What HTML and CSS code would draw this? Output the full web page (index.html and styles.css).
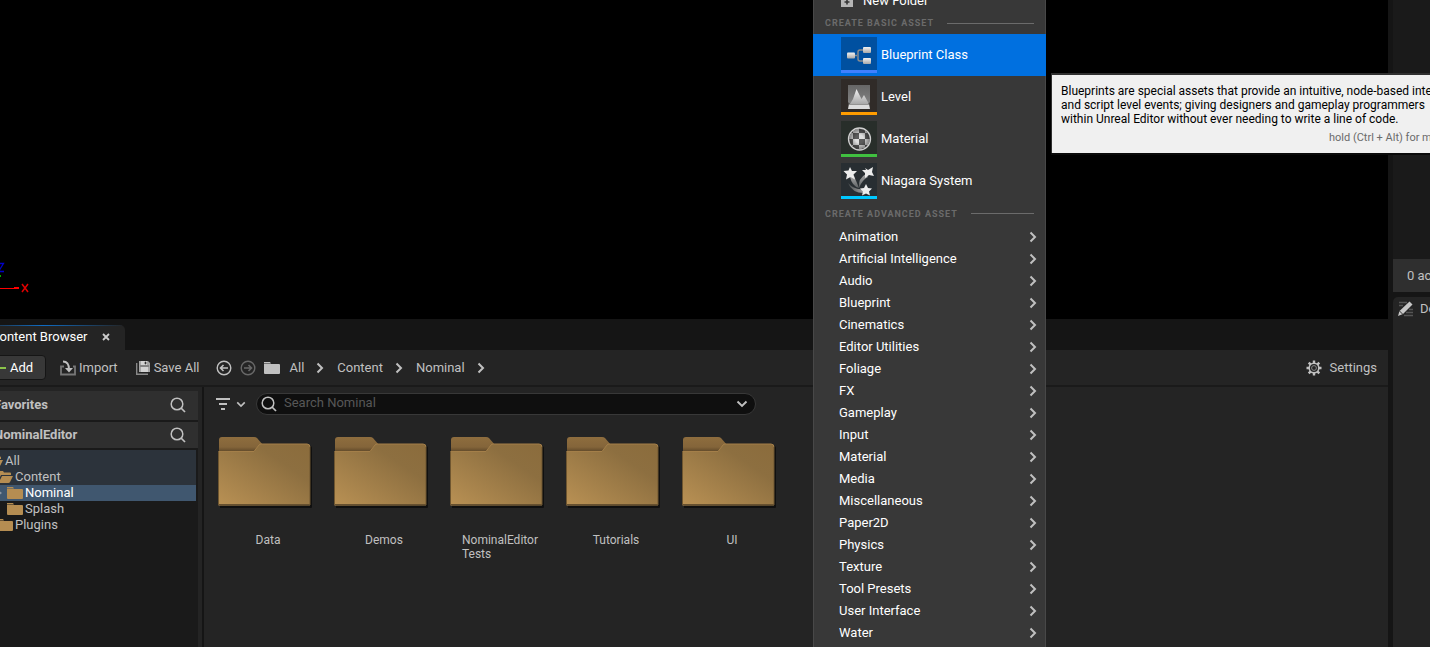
FILE: index.html
```html
<!DOCTYPE html>
<html lang="en">
<head>
<meta charset="utf-8">
<title>Content Browser</title>
<link rel="stylesheet" href="styles.css">
</head>
<body>
<svg class="defs" aria-hidden="true">
  <defs>
    <linearGradient id="front" x1="0" y1="1" x2="1" y2="0"><stop offset="0" stop-color="#b99154"/><stop offset=".7" stop-color="#8d6f40"/><stop offset="1" stop-color="#8b6c3c"/></linearGradient>
    <linearGradient id="tab" x1="0" y1="0" x2="0" y2="1"><stop offset="0" stop-color="#8e6d3e"/><stop offset=".5" stop-color="#84653a"/><stop offset=".75" stop-color="#5c4628"/></linearGradient>
    <linearGradient id="silver" x1="0" y1="0" x2="0" y2="1"><stop offset="0" stop-color="#f2f2f2"/><stop offset="1" stop-color="#a8a8a8"/></linearGradient>
    <linearGradient id="steel" x1="0" y1="0" x2="0" y2="1"><stop offset="0" stop-color="#666"/><stop offset="1" stop-color="#8a8a8a"/></linearGradient>
    <linearGradient id="trail" x1="0" y1="0" x2="0" y2="1"><stop offset="0" stop-color="#a8a8a8"/><stop offset="1" stop-color="#5c6062"/></linearGradient>
    <linearGradient id="trail-low" x1="0" y1="0" x2="1" y2="0"><stop offset="0" stop-color="#4c5052"/><stop offset="1" stop-color="#a0a0a0"/></linearGradient>
    <radialGradient id="shade"><stop offset=".4" stop-color="#000" stop-opacity="0"/><stop offset="1" stop-color="#000" stop-opacity=".4"/></radialGradient>
    <clipPath id="ball"><circle cx="18.500" cy="18" r="10"/></clipPath>
    <symbol id="folder-big" viewBox="0 0 94 72">
      <path d="M2 10h90q2 0 2 2v59q0 1-1 1H2z" fill="#101010"/>
      <path d="M1 20V4q0-3 3-3h32q2 0 3 1l6 7-5 12H1z" fill="url(#tab)"/>
      <path d="M.5 15.500H36l5-6.500q1-1 2-1h46q3 0 3 3v58.500H.5z" fill="url(#front)"/>
      <path d="M.5 15.500H36l5-6.500q1-1 2-1h46q3 0 3 3" fill="none" stroke="#a47f49"/>
      <path d="M0 68.500h92" stroke="#66502f"/><path d="M92 11v58M.5 16v53" stroke="#6f5630"/>
    </symbol>
    <symbol id="search" viewBox="0 0 16 16"><circle cx="7" cy="7" r="5.800" fill="none" stroke="currentColor" stroke-width="1.500"/><path d="M11 11l4 4" stroke="currentColor" stroke-width="1.700"/></symbol>
    <symbol id="chev" viewBox="0 0 8 12"><path d="M1.500 1.500L6 6l-4.500 4.500" fill="none" stroke="currentColor" stroke-width="2"/></symbol>
    <symbol id="down" viewBox="0 0 12 8"><path d="M1.500 1.500L6 6l4.500-4.500" fill="none" stroke="currentColor" stroke-width="1.900"/></symbol>
    <symbol id="folder" viewBox="0 0 16 12"><path d="M0 0h6l1 1.500H0zM0 2h15q1 0 1 1v8q0 1-1 1H1q-1 0-1-1z" fill="currentColor"/></symbol>
    <symbol id="folder-open" viewBox="0 0 16 12"><path d="M0 1q0-1 1-1h5l1 1.500h6q1 0 1 1V4H4L2 8H0zM5 5h11l-3 6q-.5 1-1.500 1H1V9h2z" fill="currentColor"/></symbol>
  </defs>
</svg>

<div class="app">
  <main class="main">
    <section class="viewport" aria-label="Viewport">
      <svg class="axes" width="60" height="36" viewBox="0 0 60 36">
        <path d="M0 28.500h38" stroke="#f00"/><path d="M38 28h5" stroke="#f00" stroke-width="2"/>
        <path d="M24 15v2" stroke="#0a0" stroke-width="2"/>
        <path d="M22 3.500h5.500L23.500 10M22 11.500h6" stroke="#0000c8" stroke-width="1.300" fill="none"/>
        <path d="M46 24l6 8M52 24l-6 8" stroke="#e00000" stroke-width="1.500"/>
      </svg>
    </section>
    <section class="dock">
      <header class="tabs">
        <div class="tab"><span>Content Browser</span>
          <button class="plain" aria-label="Close tab"><svg width="8" height="8" viewBox="0 0 8 8"><path d="M1 1l6 6M7 1L1 7" stroke="#ccc" stroke-width="1.800"/></svg></button>
        </div>
      </header>
      <div class="toolbar">
        <button class="add"><svg width="12" height="12" viewBox="0 0 12 12"><path d="M0 6h12M5 0v12" stroke="#8bc34a" stroke-width="2"/></svg>Add</button>
        <button class="plain import"><svg width="16" height="16" viewBox="0 0 16 16"><path d="M4 6.500H1v8h14v-8h-2" fill="none" stroke="#777" stroke-width="1.800"/><path d="M3 1.500q6 0 6 8" fill="none" stroke="#c0c0c0" stroke-width="1.800"/><path d="M5 8h8l-4 4.500z" fill="#c0c0c0"/></svg>Import</button>
        <button class="plain save"><svg width="14" height="14" viewBox="0 0 14 14"><path d="M.7 2v11.300H12" fill="none" stroke="#888" stroke-width="1.400"/><path d="M3 0h9l2 2v9H3z" fill="#a5a5a5"/><path d="M5 0h6v4H5zM5 6h7v5H5z" fill="#d2d2d2"/><path d="M9 1h1v2H9zM4 5h9" stroke="#444" stroke-width=".7"/></svg>Save All</button>
        <nav class="crumbs">
          <button class="plain" aria-label="Back"><svg width="16" height="16" viewBox="0 0 16 16"><circle cx="8" cy="8" r="6.800" fill="none" stroke="#c0c0c0" stroke-width="1.400"/><path d="M12 8H5M7.500 5L4.500 8l3 3" fill="none" stroke="#c0c0c0" stroke-width="1.600"/></svg></button>
          <button class="plain fwd" aria-label="Forward"><svg width="16" height="16" viewBox="0 0 16 16"><circle cx="8" cy="8" r="6.800" fill="none" stroke="#686868" stroke-width="1.400"/><path d="M4 8h7M8.500 5l3 3-3 3" fill="none" stroke="#686868" stroke-width="1.600"/></svg></button>
          <svg class="root" width="16" height="12"><use href="#folder"/></svg>
          <a href="#all">All</a><svg width="8" height="12"><use href="#chev"/></svg>
          <a href="#content">Content</a><svg width="8" height="12"><use href="#chev"/></svg>
          <a href="#nominal">Nominal</a><svg width="8" height="12"><use href="#chev"/></svg>
        </nav>
        <button class="plain settings"><svg width="16" height="16" viewBox="0 0 16 16"><path d="M8 .5v3M8 12.500v3M.5 8h3M12.500 8h3M2.700 2.700l2 2M11.300 11.300l2 2M13.300 2.700l-2 2M4.700 11.300l-2 2" stroke="#c0c0c0" stroke-width="2.400"/><circle cx="8" cy="8" r="4.800" fill="none" stroke="#c0c0c0" stroke-width="1.500"/><circle cx="8" cy="8" r="2.400" fill="none" stroke="#888"/></svg>Settings</button>
      </div>
      <div class="browser">
        <aside class="sources">
          <div class="source fav"><span>Favorites</span><button class="plain" aria-label="Search favorites"><svg width="16" height="16"><use href="#search"/></svg></button></div>
          <div class="source"><span>NominalEditor</span><button class="plain" aria-label="Search sources"><svg width="16" height="16"><use href="#search"/></svg></button></div>
          <ul class="tree">
            <li class="tint first"><svg width="16" height="12"><use href="#folder-open"/></svg>All</li>
            <li class="tint d1"><svg width="16" height="12"><use href="#folder-open"/></svg>Content</li>
            <li class="sel"><svg class="caret" width="5" height="6" viewBox="0 0 5 6"><path d="M1 0l4 3-4 3z" fill="#8e98a3"/></svg><svg width="16" height="12"><use href="#folder"/></svg>Nominal</li>
            <li class="d2"><svg width="16" height="12"><use href="#folder"/></svg>Splash</li>
            <li class="d1"><svg width="16" height="12"><use href="#folder"/></svg>Plugins</li>
          </ul>
        </aside>
        <section class="assets">
          <div class="filters">
            <button class="plain filter" aria-label="Filters"><svg width="14" height="12" viewBox="0 0 14 12"><path d="M0 1h14M3 6h8M5 11h4" stroke="#c0c0c0" stroke-width="2"/></svg><svg width="10" height="7"><use href="#down"/></svg></button>
            <label class="searchbox"><svg width="16" height="16"><use href="#search"/></svg><input type="text" placeholder="Search Nominal" aria-label="Search Nominal"><svg width="12" height="8"><use href="#down"/></svg></label>
          </div>
          <div class="tiles">
            <figure><svg width="94" height="72"><use href="#folder-big"/></svg><figcaption>Data</figcaption></figure>
            <figure><svg width="94" height="72"><use href="#folder-big"/></svg><figcaption>Demos</figcaption></figure>
            <figure><svg width="94" height="72"><use href="#folder-big"/></svg><figcaption>NominalEditor<br>Tests</figcaption></figure>
            <figure><svg width="94" height="72"><use href="#folder-big"/></svg><figcaption>Tutorials</figcaption></figure>
            <figure><svg width="94" height="72"><use href="#folder-big"/></svg><figcaption>UI</figcaption></figure>
          </div>
        </section>
      </div>
    </section>
  </main>
  <aside class="right">
    <div class="outliner"></div>
    <div class="count">0 actors</div>
    <div class="details"><svg width="16" height="16" viewBox="0 0 16 16"><path d="M1 1.500h8M1 4.500h4M11 8.500h4M8 11.500h7M6 14.500h9" stroke="#555" stroke-width="1.300"/><path d="M0 15l1.500-5L11.500.5l3 3L5 13z" fill="#c8c8c8"/><path d="M1.500 10l3.500 3.500" stroke="#333"/></svg>Details</div>
  </aside>
</div>

<div class="menu" role="menu">
  <button class="row new"><svg width="12" height="12" viewBox="0 0 12 12"><path d="M0 0h5l1 2h6v10H0z" fill="#b5b5b5"/><path d="M6 4.500v5M3.500 7h5" stroke="#333" stroke-width="1.600"/></svg>New Folder</button>
  <div class="heading">CREATE BASIC ASSET</div>
  <button class="asset active"><span class="thumb blueprint"><svg width="36" height="33" viewBox="0 0 36 33"><path d="M13 18.500h3M23 13h-4q-2 0-2 2v7q0 2 2 2h4" fill="none" stroke="#8d8d8d" stroke-width="1.400"/><rect x="6" y="15.500" width="8" height="6" rx="1" fill="url(#silver)"/><rect x="22" y="10" width="8" height="6" rx="1" fill="url(#silver)"/><rect x="22" y="21" width="8" height="6" rx="1" fill="url(#silver)"/></svg></span>Blueprint Class</button>
  <button class="asset"><span class="thumb level"><svg width="36" height="33" viewBox="0 0 36 33"><path d="M7 6h22v23H7z" fill="url(#steel)"/><path d="M9 25l3-5 3.500-10 5 10 2.500-4 5 9z" fill="url(#silver)"/><path d="M7 23l2 2h18l2-2v6.500H7z" fill="#4c4a48"/><path d="M8 25.500h20l1 4.500H7z" fill="#dcdcdc"/></svg></span>Level</button>
  <button class="asset"><span class="thumb material"><svg width="36" height="33" viewBox="0 0 36 33"><circle cx="18.500" cy="18" r="11" fill="#333"/><g clip-path="url(#ball)"><path d="M8 7h22v22H8z" fill="#5c5c5c"/><path d="M6 12h6v6H6zM12 7h6v5h-6zM24 7h6v5h-6zM18 12h6v6h-6zM12 18h6v6h-6zM24 18h6v6h-6zM6 24h6v6H6zM18 24h6v5h-6z" fill="#dedede"/><circle cx="18.500" cy="18" r="10" fill="url(#shade)"/></g><circle cx="18.500" cy="18" r="11" fill="none" stroke="#d0d0d0" stroke-width="1.300"/></svg></span>Material</button>
  <button class="asset"><span class="thumb niagara"><svg width="36" height="33" viewBox="0 0 36 33"><path d="M9 14q2 9 9 11q-2-5-5-12z" fill="url(#trail)"/><path d="M25 11q-8 4-7 14q3-8 9-11z" fill="url(#trail)"/><path d="M7 20q4 10 16 10l-1-4q-9 1-15-6z" fill="url(#trail-low)"/><g fill="#ececec"><path d="M9 4l2 4h5l-3.500 3.500 1.500 5L9.500 14 5 16.500l1-5L2.500 8l5-.5z"/><path d="M24 5l3 2 5-3-1 5 2 4-5-1-4 3v-5l-3-3h4z"/><path d="M25 21l2 4 4 .5-3 3 1 4-4-2-4 2 1-4-3-3 4-.5z"/></g></svg></span>Niagara System</button>
  <div class="heading">CREATE ADVANCED ASSET</div>
  <button class="row">Animation<svg width="8" height="12"><use href="#chev"/></svg></button>
  <button class="row">Artificial Intelligence<svg width="8" height="12"><use href="#chev"/></svg></button>
  <button class="row">Audio<svg width="8" height="12"><use href="#chev"/></svg></button>
  <button class="row">Blueprint<svg width="8" height="12"><use href="#chev"/></svg></button>
  <button class="row">Cinematics<svg width="8" height="12"><use href="#chev"/></svg></button>
  <button class="row">Editor Utilities<svg width="8" height="12"><use href="#chev"/></svg></button>
  <button class="row">Foliage<svg width="8" height="12"><use href="#chev"/></svg></button>
  <button class="row">FX<svg width="8" height="12"><use href="#chev"/></svg></button>
  <button class="row">Gameplay<svg width="8" height="12"><use href="#chev"/></svg></button>
  <button class="row">Input<svg width="8" height="12"><use href="#chev"/></svg></button>
  <button class="row">Material<svg width="8" height="12"><use href="#chev"/></svg></button>
  <button class="row">Media<svg width="8" height="12"><use href="#chev"/></svg></button>
  <button class="row">Miscellaneous<svg width="8" height="12"><use href="#chev"/></svg></button>
  <button class="row">Paper2D<svg width="8" height="12"><use href="#chev"/></svg></button>
  <button class="row">Physics<svg width="8" height="12"><use href="#chev"/></svg></button>
  <button class="row">Texture<svg width="8" height="12"><use href="#chev"/></svg></button>
  <button class="row">Tool Presets<svg width="8" height="12"><use href="#chev"/></svg></button>
  <button class="row">User Interface<svg width="8" height="12"><use href="#chev"/></svg></button>
  <button class="row">Water<svg width="8" height="12"><use href="#chev"/></svg></button>
</div>

<div class="tooltip" role="tooltip">
  <p>Blueprints are special assets that provide an intuitive, node-based interface<br>and script level events; giving designers and gameplay programmers<br>within Unreal Editor without ever needing to write a line of code.</p>
  <p class="hint">hold (Ctrl + Alt) for more</p>
</div>
</body>
</html>
```
FILE: styles.css
```css
* { box-sizing: border-box; }
body {
  position: relative;
  height: 100vh;
  margin: 0;
  overflow: hidden;
  background: #151515;
  color: #c0c0c0;
  font: 13px/16px Roboto, sans-serif;
}
svg { display: block; flex: none; }
.defs { position: absolute; width: 0; height: 0; }
button { border: 0; padding: 0; background: none; color: inherit; font: inherit; display: flex; align-items: center; }

/* The shell runs past the left and right window edges */
.app { display: flex; gap: 5px; height: 100%; margin-left: -24px; }
.main { flex: 1; min-width: 0; display: flex; flex-direction: column; }
.viewport { flex: 1; background: #000; display: flex; align-items: flex-end; padding-bottom: 23px; }
.dock { height: 328px; display: flex; flex-direction: column; }

.tabs { padding-top: 6px; }
.tab {
  width: 149px;
  height: 25px;
  display: flex;
  align-items: center;
  gap: 15px;
  padding: 0 0 2px 15px;
  border-radius: 5px 5px 0 0;
  background: linear-gradient(90deg, #242424, #0f6cc4 45%, #242424) top / 100% 1px no-repeat #242424;
  color: #fff;
}
.toolbar {
  height: 37px;
  display: flex;
  align-items: center;
  padding: 0 11px 0 0;
  border-bottom: 2px solid #1a1a1a;
  background: #242424;
}
.add {
  width: 70px;
  height: 25px;
  gap: 4px;
  padding-left: 17px;
  border: 1px solid #151515;
  border-radius: 4px;
  background: #383838;
  color: #fff;
}
.import { gap: 3px; margin-left: 14px; }
.save { gap: 4px; margin-left: 18px; }
.crumbs { display: flex; align-items: center; margin-left: 17px; }
.crumbs a { color: inherit; text-decoration: none; margin-right: 12px; }
.crumbs a + svg { margin-right: 13px; }
.fwd { margin-left: 8px; }
.root { margin: 0 9px 0 8px; }
.settings { gap: 8px; margin-left: auto; }

.browser { flex: 1; min-height: 0; display: flex; background: #242424; }
.sources { width: 228px; display: flex; flex-direction: column; padding: 4px 4px 0 0; border-right: 2px solid #151515; }
.source {
  height: 28px;
  display: flex;
  justify-content: space-between;
  align-items: center;
  padding: 0 12px 0 18px;
  border-bottom: 2px solid #1a1a1a;
  background: #2f2f2f;
  font-weight: 700;
}
.fav { height: 31px; padding-bottom: 2px; }
.tree { flex: 1; margin: 0; padding: 0; list-style: none; background: #1a1a1a; border-right: 2px solid #1a1a1a; }
.tree li { height: 16px; display: flex; align-items: center; gap: 2px; padding-left: 11px; }
.tree svg { color: #b58d52; }
.tree .tint { background: #2c333b; }
.tree .first { height: 19px; padding-top: 3px; }
.tree .d1 { padding-left: 21px; }
.tree .d2 { padding-left: 31px; }
.tree .sel { padding-left: 21px; gap: 2px; background: #40576f; color: #fff; }
.tree .caret { margin-right: 3px; }

.assets { flex: 1; min-width: 0; padding: 6px 0 0 6px; }
.filters { display: flex; gap: 10px; padding-left: 6px; }
.filter { gap: 6px; }
.searchbox {
  width: 500px;
  height: 22px;
  display: flex;
  align-items: center;
  gap: 7px;
  padding: 0 7px 0 4px;
  border: 1px solid #383838;
  border-radius: 11px;
  background: #0f0f0f;
}
.searchbox input { flex: 1; min-width: 0; border: 0; padding: 0 0 2px; background: none; color: #c0c0c0; font: inherit; outline: 0; }
.searchbox input::placeholder { color: #575757; opacity: 1; }
.tiles { display: flex; flex-wrap: wrap; margin-top: 21px; }
.tiles figure { width: 116px; margin: 0; display: flex; flex-direction: column; gap: 25px; padding-left: 8px; }
.tiles figcaption { align-self: center; margin-right: 8px; font-size: 12px; line-height: 14px; }

.right { width: 37px; display: flex; flex-direction: column; overflow: hidden; white-space: nowrap; }
.outliner { height: 259px; background: #1a1a1a; }
.count { height: 33px; padding: 9px 0 0 14px; background: #2f2f2f; }
.details { flex: 1; display: flex; align-items: flex-start; gap: 6px; margin-top: 5px; padding: 4px 0 0 5px; border-radius: 5px 0 0; background: #242424; }

.menu {
  position: absolute;
  top: -10px;
  bottom: 0;
  left: 813px;
  width: 233px;
  background: #383838;
  border: solid #484848;
  border-width: 0 1px;
  color: #fff;
}
.row { width: 100%; height: 22px; justify-content: space-between; padding: 0 8px 0 25px; }
.row svg { color: #c0c0c0; }
.new { justify-content: flex-start; gap: 10px; padding-left: 27px; }
.heading {
  height: 22px;
  display: flex;
  align-items: center;
  gap: 13px;
  padding: 0 11px;
  color: #6b6b6b;
  font-size: 9px;
  font-weight: 700;
  letter-spacing: 1px;
}
.asset + .heading { height: 24px; padding-bottom: 1px; }
.heading::after { content: ""; flex: 1; height: 1px; background: #6b6b6b; }
.asset { width: 100%; height: 42px; gap: 4px; padding-left: 27px; }
.active { background: #0070e0; box-shadow: -1px 0 #0070e0, 1px 0 #0070e0; }
.thumb { border-bottom: 3px solid; }
.blueprint { background: #0050a0; border-color: #4080ff; }
.level { background: #302b28; border-color: #ff9c00; }
.material { background: #282e2a; border-color: #40c040; }
.niagara { background: #282e32; border-color: #00c8ff; }

.tooltip {
  position: absolute;
  top: 73px;
  left: 1051px;
  right: 0;
  overflow: hidden;
  padding: 9px 0 8px 9px;
  border: solid #303030;
  border-width: 2px 0 0 1px;
  box-shadow: 0 2px 0 #0a0a0a;
  background: #f0f0f0;
  color: #000;
  font-size: 12px;
  line-height: 14px;
  white-space: nowrap;
}
.tooltip p { margin: 0; }
.tooltip .hint { padding-left: 268px; margin-top: 5px; color: #6b6b6b; font-size: 11px; }
```
